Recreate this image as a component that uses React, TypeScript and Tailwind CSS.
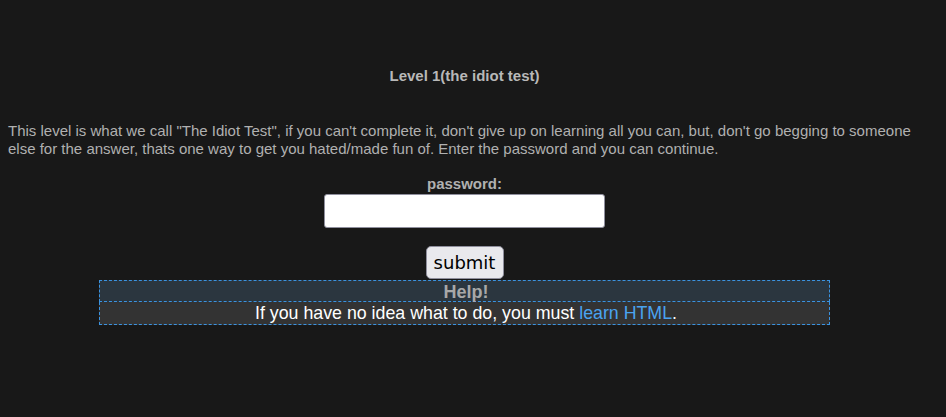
import React from "react";

export default function App() {
  return (
    <div className="h-[417px] w-[946px] overflow-hidden bg-[#181818] font-['Liberation_Sans',Arial,sans-serif] text-[#b4b4b4]">
      <div className="w-[929px] flex flex-col items-center">
        <h1 className="mt-[67px] text-[15px] leading-[18px] font-bold text-[#b8b8b8]">Level 1(the idiot test)</h1>
        <p className="mt-[37px] self-stretch px-[8px] text-[15px] leading-[18px] text-[#b0b0b0]">
          This level is what we call "The Idiot Test", if you can't complete it, don't give up on learning all you can, but, don't go begging to someone else for the answer, thats one way to get you hated/made fun of. Enter the password and you can continue.
        </p>
        <label className="mt-[17px] text-[15px] leading-[18px] font-bold text-[#b0b0b0]">password:</label>
        <input
          type="password"
          className="mt-[1px] h-[34px] w-[281px] rounded-[3px] border border-[#8f8f9d] bg-white"
        />
        <button className="mt-[18px] h-[33px] w-[78px] rounded-[5px] border border-[#8f8f9d] bg-[#e9e9ed] font-['DejaVu_Sans',sans-serif] text-[18px] leading-[20px] text-black">
          submit
        </button>
        <div className="mt-[1px] w-[731px] flex flex-col">
          <div className="h-[22px] border-[1px] border-dashed border-[color:#3b93e0] bg-[#2b363f] pt-[1px] pl-[3px] text-center text-[18px] leading-[20px] font-bold text-[#a8a8a8]">
            Help!
          </div>
          <div className="h-[23px] border-x-[1px] border-b-[1px] border-t-0 border-dashed border-[color:#3b93e0] bg-[#333333] pl-[3px] text-center text-[17.8px] leading-[23px] text-white">
            If you have no idea what to do, you must <a className="text-[#4aa3f0]">learn HTML</a>.
          </div>
        </div>
      </div>
    </div>
  );
}
